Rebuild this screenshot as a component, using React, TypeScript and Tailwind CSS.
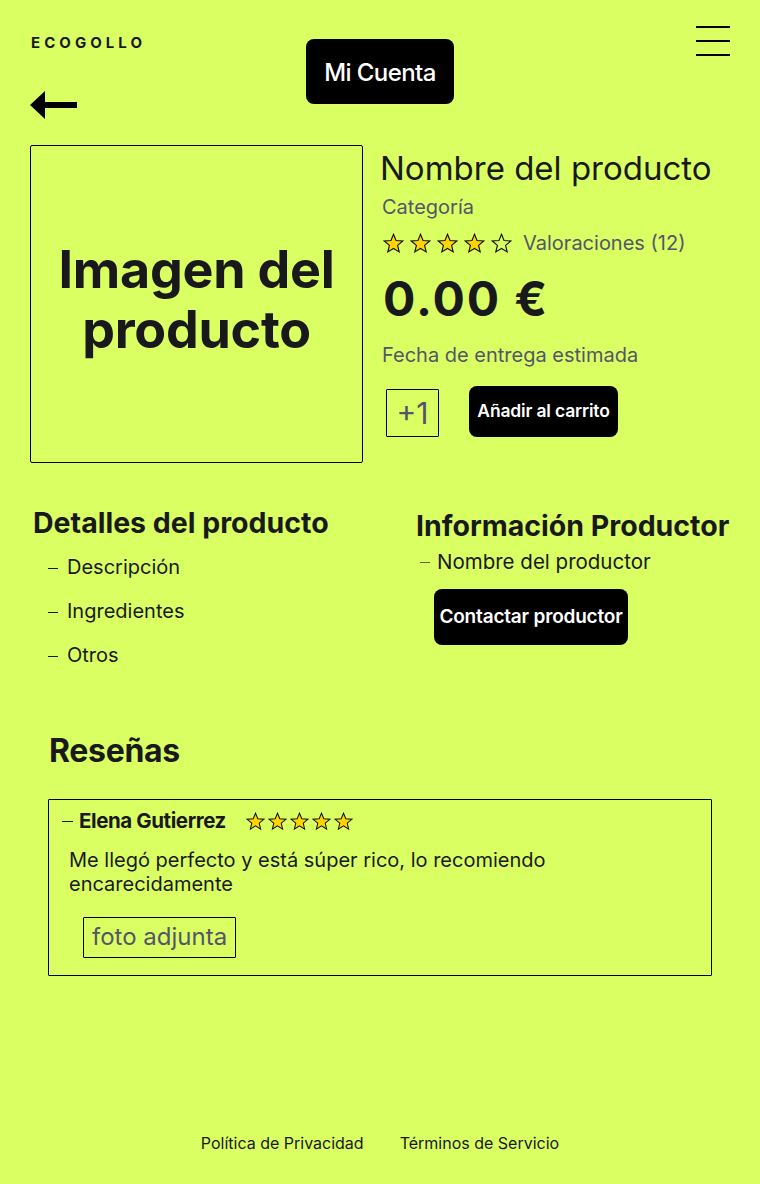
import React from 'react';

const Star = ({ filled = true, size = 20 }: { filled?: boolean; size?: number }) => (
  <svg width={size} height={size} viewBox="0 0 24 24" className="shrink-0">
    <polygon
      points="12,1.5 14.9,8.6 22.5,9.2 16.7,14.1 18.5,21.6 12,17.6 5.5,21.6 7.3,14.1 1.5,9.2 9.1,8.6"
      fill={filled ? '#ffd400' : 'none'}
      stroke="#111"
      strokeWidth="1.3"
      strokeLinejoin="miter"
    />
  </svg>
);

const Stars = ({ count, total = 5, size, gap }: { count: number; total?: number; size: number; gap: string }) => (
  <div className={`flex items-center ${gap}`}>
    {Array.from({ length: total }).map((_, i) => (
      <Star key={i} filled={i < count} size={size} />
    ))}
  </div>
);

const detalles = ['Descripción', 'Ingredientes', 'Otros'];

export default function App() {
  return (
    <div
      className="min-h-[1184px] w-full bg-[#d9ff63] text-[#19191c] flex flex-col"
      style={{ fontFamily: 'Inter, "Noto Sans", sans-serif' }}
    >
      {/* header */}
      <header className="grid grid-cols-3 px-[30px]">
        <div className="flex flex-col items-start">
          <span className="mt-[35px] text-[15px] font-bold tracking-[0.27em] leading-none pl-[1px]">ECOGOLLO</span>
          <svg width="48" height="30" viewBox="0 0 48 30" className="mt-[41px]">
            <polygon points="0,14 15,0 15,11 47,11 47,17 15,17 15,28" fill="#000" />
          </svg>
        </div>
        <div className="flex justify-center">
          <button className="mt-[39px] h-[65px] w-[148px] rounded-[8px] bg-black text-white text-[24px] font-medium tracking-tight pt-[3px]">
            Mi Cuenta
          </button>
        </div>
        <div className="flex justify-end">
          <div className="mt-[26px] flex flex-col gap-[12px] w-[34px]">
            <span className="h-[2px] bg-black" />
            <span className="h-[2px] bg-black" />
            <span className="h-[2px] bg-black" />
          </div>
        </div>
      </header>

      {/* product */}
      <section className="flex px-[30px] mt-[24px] gap-[18px]">
        <div className="w-[333px] h-[318px] shrink-0 border border-black rounded-[2px] flex items-center justify-center">
          <p className="text-center text-[52px] font-bold leading-[60px] tracking-[-0.005em] -mt-[8px]">
            Imagen del
            <br />
            producto
          </p>
        </div>
        <div className="flex flex-col pt-[4px]">
          <h1 className="text-[33px] leading-[40px] font-normal -mt-[1px] mb-[1px] -ml-[1px]">Nombre del producto</h1>
          <p className="text-[20px] leading-[28px] text-[#55556a] mt-[4px] pl-[1px]">Categoría</p>
          <div className="flex items-center mt-[7px] pl-[2px]">
            <Stars count={4} size={21} gap="gap-[6px]" />
            <span className="ml-[11px] text-[20px] text-[#55556a]">Valoraciones (12)</span>
          </div>
          <p className="text-[48px] font-bold leading-none tracking-[0.04em] mt-[17px] pl-[2px]">0.00 €</p>
          <p className="text-[20px] leading-[28px] text-[#55556a] mt-[18px] pl-[1px]">Fecha de entrega estimada</p>
          <div className="flex items-center mt-[17px] pl-[5px]">
            <div className="w-[53px] h-[48px] border border-black rounded-[1px] flex items-center justify-center text-[30px] text-[#55556a] mt-[3px]">
              +1
            </div>
            <button className="ml-[30px] h-[51px] w-[149px] rounded-[8px] bg-black text-white text-[17.5px] font-semibold tracking-[-0.01em]">
              Añadir al carrito
            </button>
          </div>
        </div>
      </section>

      {/* details + producer */}
      <section className="flex px-[33px] mt-[43px]">
        <div className="w-[383px] shrink-0">
          <h2 className="text-[28.5px] font-bold leading-[34px]">Detalles del producto</h2>
          <ul className="mt-[14px] pl-[15px] flex flex-col gap-[18px]">
            {detalles.map((d) => (
              <li key={d} className="flex items-center text-[20px] leading-[26px]">
                <span className="w-[10px] h-px bg-[#19191c] mr-[9px] mt-[2px]" />
                {d}
              </li>
            ))}
          </ul>
        </div>
        <div className="pt-[3px]">
          <h2 className="text-[28.5px] font-bold leading-[34px] whitespace-nowrap">Información Productor</h2>
          <p className="flex items-center text-[20.5px] leading-[26px] mt-[6px] pl-[4px]">
            <span className="w-[10px] h-px bg-[#5a6b1c] mr-[7px]" />
            Nombre del productor
          </p>
          <button className="ml-[18px] mt-[14px] h-[56px] w-[194px] rounded-[8px] bg-black text-white text-[19px] font-semibold tracking-[-0.01em]">
            Contactar productor
          </button>
        </div>
      </section>

      {/* reviews */}
      <section className="px-[48px] mt-[65px]">
        <h2 className="text-[32px] font-bold leading-[36px] pl-[1px] tracking-[-0.01em]">Reseñas</h2>
        <div className="mt-[30px] w-[664px] h-[177px] border border-black rounded-[1px] px-[13px] pt-[6px]">
          <div className="flex items-center">
            <span className="w-[11px] h-px bg-[#19191c] mr-[6px]" />
            <span className="text-[20.5px] font-bold tracking-[-0.02em]">Elena Gutierrez</span>
            <div className="ml-[20px]">
              <Stars count={5} size={19} gap="gap-[3px]" />
            </div>
          </div>
          <p className="mt-[11px] pl-[7px] text-[20px] leading-[24px] w-[560px]">
            Me llegó perfecto y está súper rico, lo recomiendo encarecidamente
          </p>
          <div className="mt-[21px] ml-[21px] inline-flex items-center h-[41px] px-[8px] border border-black rounded-[1px] text-[24px] text-[#55556a]">
            foto adjunta
          </div>
        </div>
      </section>

      {/* footer */}
      <footer className="mt-auto pb-[29px] flex justify-center gap-[36px] text-[16px]">
        <span>Política de Privacidad</span>
        <span>Términos de Servicio</span>
      </footer>
    </div>
  );
}
